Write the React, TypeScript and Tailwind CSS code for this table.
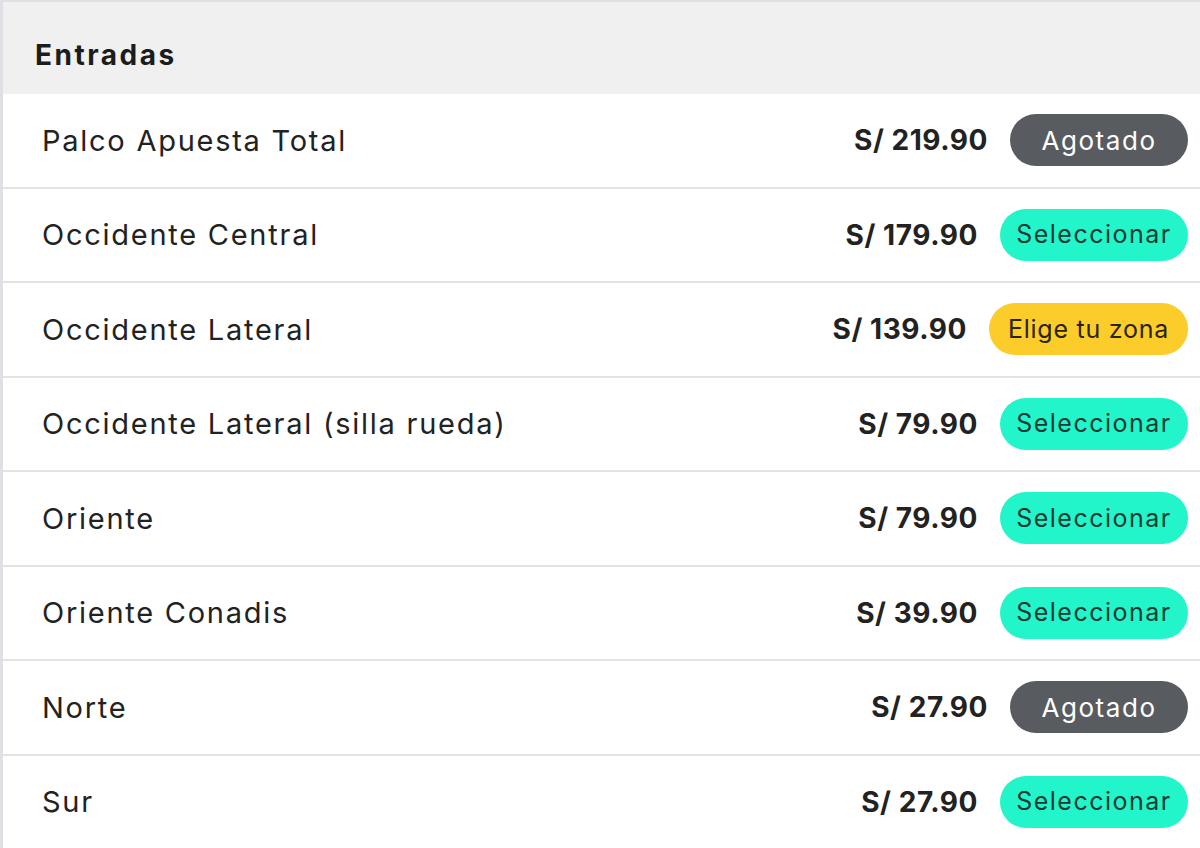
const tickets = [
    { name: "Palco Apuesta Total", price: "S/ 219.90", status: "agotado" },
    { name: "Occidente Central", price: "S/ 179.90", status: "select" },
    { name: "Occidente Lateral", price: "S/ 139.90", status: "zona" },
    { name: "Occidente Lateral (silla rueda)", price: "S/ 79.90", status: "select" },
    { name: "Oriente", price: "S/ 79.90", status: "select" },
    { name: "Oriente Conadis", price: "S/ 39.90", status: "select" },
    { name: "Norte", price: "S/ 27.90", status: "agotado" },
    { name: "Sur", price: "S/ 27.90", status: "select" },
];

function StatusButton({ status }: { status: string }) {
    if (status === "agotado") {
        return (
            <button className="h-[52px] w-[178px] rounded-full bg-[#585c61] text-white text-[26px] tracking-[0.06em] flex items-center justify-center">
                Agotado
            </button>
        );
    }
    if (status === "zona") {
        return (
            <button className="h-[52px] w-[199px] rounded-full bg-[#fccc2b] text-[#2a2310] text-[25px] tracking-[0.03em] flex items-center justify-center">
                Elige tu zona
            </button>
        );
    }
    return (
        <button className="h-[52px] w-[188px] rounded-full bg-[#23f5ca] text-[#163a32] text-[25px] tracking-[0.06em] flex items-center justify-center">
            Seleccionar
        </button>
    );
}

export default function App() {
    return (
        <div
            className="w-[1200px] h-[848px] overflow-hidden bg-white border-l-[3px] border-t-2 border-[#dfe0e3] text-[#222]"
            style={{ fontFamily: "Inter, 'Noto Sans', sans-serif" }}
        >
            {/* Header */}
            <div className="h-[92px] bg-[#f0f0f0] flex items-center pl-[32px] pt-[14px]">
                <h2 className="text-[28px] font-bold tracking-[0.09em] text-[#1c1c1c]">Entradas</h2>
            </div>

            {/* Rows */}
            {tickets.map((t, i) => (
                <div key={i} className="h-[94.5px] flex items-center justify-between pl-[39px] pr-[12px] border-b-2 border-[#e3e3e3]">
                    <span className="text-[29px] tracking-[0.06em]">{t.name}</span>
                    <div className="flex items-center gap-[22px]">
                        <span className="text-[28px] font-bold tracking-[0.02em]">{t.price}</span>
                        <StatusButton status={t.status} />
                    </div>
                </div>
            ))}
        </div>
    );
}
